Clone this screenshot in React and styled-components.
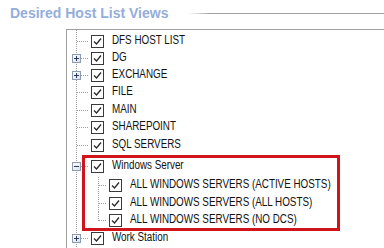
import React from 'react';
import styled, { createGlobalStyle } from 'styled-components';

const Global = createGlobalStyle`
  html, body { margin: 0; padding: 0; background: #fff; overflow: hidden; }
  body { width: 384px; height: 248px; }
`;

const Page = styled.div`
  width: 384px;
  height: 248px;
  display: flex;
  flex-direction: column;
  overflow: hidden;
`;

const Header = styled.div`
  height: 29px;
  box-sizing: border-box;
  padding: 5px 0 0 10px;
  display: flex;
  align-items: flex-start;
  flex-shrink: 0;
`;

const Title = styled.h2`
  margin: 0;
  font: bold 14px/16px "Liberation Sans", Arial, sans-serif;
  letter-spacing: 0;
  color: #94aedb;
  white-space: nowrap;
`;

const Rule = styled.div`
  flex: 1;
  height: 1px;
  margin: 8px 0 0 20px;
  background: linear-gradient(to right, rgba(160, 160, 160, 0), #a0a0a0 22px);
`;

const Tree = styled.div`
  flex: 1;
  margin-left: 66px;
  border-top: 1px solid #a0a0a0;
  border-left: 1px solid #a0a0a0;
  padding-top: 3px;
  background-image: repeating-linear-gradient(to bottom, #a0a0a0 0 1px, transparent 1px 2px);
  background-size: 1px 100%;
  background-repeat: no-repeat;
  background-position: 9px 0;
  font-family: "Liberation Sans Narrow", "Arial Narrow", "Liberation Sans", sans-serif;
  font-size: 12px;
  color: #111;
`;

const Row = styled.div`
  display: flex;
  align-items: flex-start;
  height: ${(p) => p.$h}px;
`;

const Indent = styled.div`
  width: ${(p) => p.$w}px;
  flex-shrink: 0;
`;

const Lines = styled.svg`
  display: block;
  flex-shrink: 0;
`;

const Box = styled.svg`
  display: block;
  flex-shrink: 0;
  margin-top: ${(p) => p.$p}px;
  margin-left: 2px;
`;

const Label = styled.span`
  display: inline-block;
  margin: ${(p) => p.$p - 1}px 0 0 8px;
  line-height: 13px;
  white-space: nowrap;
  transform: scaleX(0.82);
  transform-origin: 0 50%;
`;

const Highlight = styled.div`
  position: relative;
  &::after {
    content: '';
    position: absolute;
    left: 15px;
    top: 0;
    width: 258px;
    height: 76px;
    box-sizing: border-box;
    border: 3px solid #d0141c;
    pointer-events: none;
  }
`;

const DOT = '#a0a0a0';

function Connector({ w, h, p, exp, vert }) {
  const cy = p + 6.5;
  const hx = exp ? 14 : 9.5;
  return (
    <Lines width={w} height={h} shapeRendering="crispEdges">
      {vert && (
        <line
          x1="9.5"
          y1="0"
          x2="9.5"
          y2={vert === 'half' ? cy : h}
          stroke={DOT}
          strokeDasharray="1 1"
        />
      )}
      <line x1={hx} y1={cy} x2={w} y2={cy} stroke={DOT} strokeDasharray="1 1" />
      {exp && (
        <g transform={`translate(5 ${p + 2})`}>
          <defs>
            <linearGradient id="expg" x1="0" y1="0" x2="1" y2="1">
              <stop offset="0" stopColor="#ffffff" />
              <stop offset="1" stopColor="#d8dfe8" />
            </linearGradient>
          </defs>
          <rect x="0.5" y="0.5" width="8" height="8" fill="url(#expg)" stroke="#8e9bb0" />
          <line x1="2" y1="4.5" x2="7" y2="4.5" stroke="#2b3a5c" />
          {exp === 'plus' && <line x1="4.5" y1="2" x2="4.5" y2="7" stroke="#2b3a5c" />}
        </g>
      )}
    </Lines>
  );
}

function CheckBox({ p }) {
  return (
    <Box $p={p} width="13" height="13" viewBox="0 0 13 13">
      <rect x="0.5" y="0.5" width="12" height="12" fill="#fff" stroke="#3a3a3a" />
      <polyline
        points="3,6.5 5.5,9 10,3.5"
        fill="none"
        stroke="#2a2a2a"
        strokeWidth="1.3"
      />
    </Box>
  );
}

function Node({ label, h, p = 2, exp, level = 0, vert }) {
  return (
    <Row $h={h}>
      {level === 1 && <Indent $w={22} />}
      <Connector w={level === 1 ? 18 : 22} h={h} p={p} exp={exp} vert={vert} />
      <CheckBox p={p} />
      <Label $p={p}>{label}</Label>
    </Row>
  );
}

const topRows = [
  { label: 'DFS HOST LIST', h: 17 },
  { label: 'DG', h: 17, exp: 'plus' },
  { label: 'EXCHANGE', h: 17, exp: 'plus' },
  { label: 'FILE', h: 18 },
  { label: 'MAIN', h: 17 },
  { label: 'SHAREPOINT', h: 18 },
  { label: 'SQL SERVERS', h: 18 },
];

const children = [
  { label: 'ALL WINDOWS SERVERS (ACTIVE HOSTS)', h: 18, vert: 'full' },
  { label: 'ALL WINDOWS SERVERS (ALL HOSTS)', h: 17, vert: 'full' },
  { label: 'ALL WINDOWS SERVERS (NO DCS)', h: 18, vert: 'half' },
];

export default function App() {
  return (
    <Page>
      <Global />
      <Header>
        <Title>Desired Host List Views</Title>
        <Rule />
      </Header>
      <Tree>
        {topRows.map((r) => (
          <Node key={r.label} {...r} />
        ))}
        <Highlight>
          <Node label="Windows Server" h={22} p={5} exp="minus" />
          {children.map((r) => (
            <Node key={r.label} level={1} {...r} />
          ))}
        </Highlight>
        <Node label="Work Station" h={18} exp="plus" />
      </Tree>
    </Page>
  );
}
